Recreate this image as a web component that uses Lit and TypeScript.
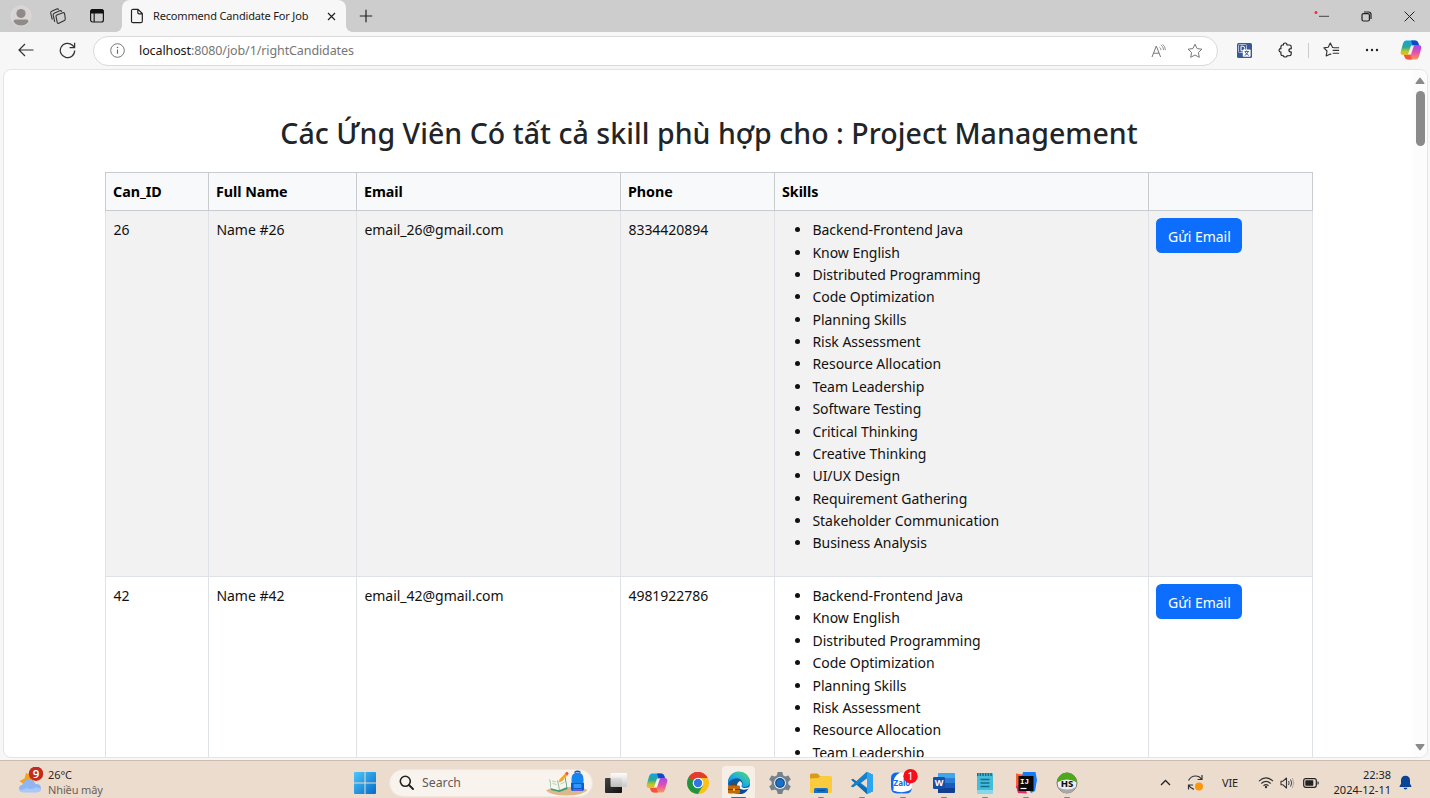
import { LitElement, html, css, svg } from "lit";
import { customElement } from "lit/decorators.js";

const skills = [
  "Backend-Frontend Java", "Know English", "Distributed Programming", "Code Optimization",
  "Planning Skills", "Risk Assessment", "Resource Allocation", "Team Leadership",
  "Software Testing", "Critical Thinking", "Creative Thinking", "UI/UX Design",
  "Requirement Gathering", "Stakeholder Communication", "Business Analysis",
];

const candidates = [
  { id: 26, phone: "8334420894" },
  { id: 42, phone: "4981922786" },
];

const icon = (w: number, h: number, body: unknown, cls = "ic") =>
  html`<svg class=${cls} width=${w} height=${h} viewBox="0 0 ${w} ${h}">${body}</svg>`;

const copilot = (n: string) => svg`
  <defs>
    <linearGradient id="a${n}" x1="0" y1="0" x2="0" y2="1"><stop offset="0" stop-color="#14a0f0"/><stop offset=".45" stop-color="#2aa98f"/><stop offset=".75" stop-color="#b9c92c"/><stop offset="1" stop-color="#f4b52a"/></linearGradient>
    <linearGradient id="b${n}" x1="0" y1="0" x2="0" y2="1"><stop offset="0" stop-color="#a24be8"/><stop offset=".5" stop-color="#e24fae"/><stop offset="1" stop-color="#fb9a55"/></linearGradient>
  </defs>
  <path d="M6 1.500h9q2.500 0 3.200 2.200L19 6h-4q-2.200 0-2.800 2L10.500 14q-.7 2-2.700 2H3.500Q0 16 .8 12.500L3 4.500Q4 1.500 6 1.500z" fill="url(#a${n})"/>
  <path d="M11 1.500h4q2.500 0 3.200 2.200L19 6h-4q-1.500 0-2.200 1z" fill="#1447c8"/>
  <path d="M16 20.500H8q-2.500 0-3.200-2.200L4 16h3.800q2 0 2.700-2L12.200 8q.6-2 2.800-2h3.500Q22 6 21.200 9.500L19 17.500q-1 3-3 3z" fill="url(#b${n})"/>
  <path d="M12 20.500H8q-2.500 0-3.200-2.200L4 16h3.800q1.500 0 2.200-1z" fill="#f4533c"/>
  <path d="M11 6.500h3l-3 9H8z" fill="#fff" opacity=".85"/>`;

const star = "M8 1.200l2.100 4.400 4.800.6-3.500 3.300.9 4.800L8 12l-4.300 2.300.9-4.800L1.100 6.200l4.800-.6z";

const ICONS = {
  avatar: icon(22, 22, svg`<circle cx="11" cy="11" r="10" fill="#d8d5d3" stroke="#dedcda"/><circle cx="11" cy="8.500" r="4.600" fill="#8f8a87"/><path d="M3.500 16.500Q3.500 14.500 5.500 14.500h11q2 0 2 2-2.500 4-7.500 4t-7.500-4z" fill="#8f8a87"/>`),
  spaces: icon(18, 18, svg`<g fill="#cdcdcd" stroke="#333" stroke-width="1.100" stroke-linejoin="round"><path d="M3.300 12.500 1.700 6.200q-.3-1.500 1-2l5-2.200q1.500-.5 2 .8"/><path d="M5.700 14.800 4.200 8.200q-.3-1.500 1-2l5.500-2.400q1.500-.5 2 .9"/><path d="M7 9.300q-.1-1 .9-1.400l6-2.200q1.300-.4 1.700.9l.7 5.200q.1 1.200-.9 1.700l-5.600 2.700q-1.300.5-1.600-.8z"/></g>`),
  tabs: icon(16, 16, svg`<rect x="1.600" y="1.600" width="12.800" height="12.400" rx="2" fill="none" stroke="#1a1a1a" stroke-width="1.200"/><path d="M1.500 2.500q.5-1.500 2-1.500h9q1.500 0 2 1.500V5.600h-13zM4.600 5h1.100v9H4.600z" fill="#111"/>`),
  page: icon(14, 16, svg`<path d="M3 1.300h5l4.300 4.300v7.600q0 1.500-1.500 1.500H3q-1.500 0-1.500-1.500V2.800Q1.500 1.300 3 1.300zM7.800 1.500v3q0 1.300 1.300 1.300h3" fill="none" stroke="#222" stroke-width="1.200"/>`),
  x: icon(9, 9, svg`<path d="M1 1l7 7M8 1 1 8" stroke="#222" stroke-width="1.200"/>`),
  plus: icon(14, 14, svg`<path d="M7 .8v12.400M.8 7h12.400" stroke="#222" stroke-width="1.200"/>`),
  min: icon(16, 12, svg`<circle cx="3" cy="2.500" r="1.500" fill="#f03030"/><path d="M6 6.300h10" stroke="#444" stroke-width="1"/>`),
  restore: icon(11, 11, svg`<rect x="1" y="2.600" width="7.400" height="7.400" rx="1.500" fill="none" stroke="#222" stroke-width="1.200"/><path d="M3 1h4.500Q10 1 10 3.500V8" fill="none" stroke="#222" stroke-width="1.200"/>`),
  close: icon(11, 11, svg`<path d="M.6.6l9.800 9.800M10.400.6.6 10.400" stroke="#222" stroke-width="1"/>`),
  back: icon(16, 14, svg`<path d="M15.500 7H1.200M7 1 1 7l6 6" fill="none" stroke="#333" stroke-width="1.200"/>`),
  reload: icon(17, 17, svg`<path d="M15.700 8.500A7.200 7.200 0 1 1 13.500 3.300L15.600 5.500M15.600.8v4.900h-5" fill="none" stroke="#333" stroke-width="1.250"/>`),
  info: icon(15, 15, svg`<circle cx="7.500" cy="7.500" r="6.800" fill="none" stroke="#777"/><path d="M7.500 6.600v4.200" stroke="#666" stroke-width="1.100"/><circle cx="7.500" cy="4.500" r=".8" fill="#666"/>`),
  read: icon(15, 14, svg`<path d="M1 13 5.300 2l4.300 11M2.500 9.200h5.600" fill="none" stroke="#777"/><path d="M8.400 3.200q1.500.7 1.600 2.900M9.800.9q2.600 1.300 2.800 5.200M11.500.3q3 2 2.900 5.800" fill="none" stroke="#888" stroke-width=".9"/>`),
  star: icon(16, 16, svg`<path d=${star} fill="none" stroke="#777" stroke-linejoin="round"/>`),
  translate: icon(15, 15, svg`<rect width="15" height="15" rx="1.500" fill="#3b5998"/><rect x="1.500" y="1.500" width="8" height="8" rx="1" fill="none" stroke="#c9d4ef" stroke-width=".8"/><path d="M4 3.200h1.500q2.300 0 2.300 2.300T5.500 7.800H4z" fill="none" stroke="#fff"/><rect x="5.800" y="6.500" width="7.800" height="7.300" rx=".8" fill="#fff"/><path d="M7.500 8.500h4.500M9.700 7.500v1M11.200 8.600q-.6 2.500-3.600 4M8.200 9q1 2.300 3.700 3.500" fill="none" stroke="#3b5998" stroke-width=".9"/>`),
  puzzle: icon(15, 16, svg`<path d="M5.400 3Q5.400 1 7.200 1T9 3h2.500q1.700 0 1.700 1.700v1.900q-2.300 0-2.300 1.700t2.300 1.700v2q0 1.700-1.700 1.700H9.200Q9.200 15 7.300 15t-1.900-1.300H4.600q-1.700 0-1.700-1.700v-1.900Q1 10 1 8.300t1.900-1.700V4.700Q2.900 3 4.600 3z" fill="none" stroke="#222" stroke-width="1.150"/>`),
  favs: icon(17, 16, svg`<path d="M10.500 5.500 9.600 5.400 7.300 1 5.200 5.200.9 5.900 4 9l-.8 4.900L7.300 12l1 .5M10.500 5.700h5.600M9.700 8.400h6.400M9.700 11.200h6.400" fill="none" stroke="#333" stroke-width="1.150" stroke-linejoin="round"/>`),
  dots: icon(14, 4, svg`<g fill="#222"><circle cx="2" cy="2" r="1.200"/><circle cx="7" cy="2" r="1.200"/><circle cx="12" cy="2" r="1.200"/></g>`),
  up: icon(10, 8, svg`<path d="M1.200 7Q0 7 .6 6L4.300.9q.7-.8 1.400 0L9.400 6Q10 7 8.800 7z" fill="#8a8a8a"/>`),
  down: icon(10, 8, svg`<path d="M1.200 1Q0 1 .6 2l3.700 5.100q.7.8 1.400 0L9.400 2Q10 1 8.800 1z" fill="#8a8a8a"/>`),
  weather: icon(28, 28, svg`<path d="M1.500 14l5-2.500L8 6l5 2 3 7-8 4z" fill="#f3a21f"/><path d="M5.500 25.300Q1 25 1 21.500q0-3 3.400-3.800Q5.500 12.700 11 12.700q5 0 6.500 4.300 5.500-.2 5.500 4.300 0 4-4.500 4z" fill="#8fb5f3"/><path d="M5.500 25.300Q1.500 25 1 22q4 2 7-1 6 2.500 10-1 3 2 5 1 0 4.300-4.500 4.300z" fill="#a9c9fb"/><circle cx="18" cy="6.700" r="7.200" fill="#c42b1c"/><text x="18" y="11" text-anchor="middle" font-size="11.500" font-weight="600" fill="#fff">9</text>`),
  windows: icon(22, 22, svg`<defs><linearGradient id="w" x1="0" y1="0" x2="1" y2="1"><stop offset="0" stop-color="#4cc8fa"/><stop offset="1" stop-color="#0569c9"/></linearGradient></defs><path d="M1 0h9.500v10.500H0V1Q0 0 1 0zM11.500 0H21q1 0 1 1v9.500H11.500zM0 11.500h10.500V22H1q-1 0-1-1zM11.500 11.500H22V21q0 1-1 1h-9.500z" fill="url(#w)"/>`),
  search: icon(15, 15, svg`<circle cx="6.300" cy="6.300" r="5" fill="none" stroke="#222" stroke-width="1.600"/><path d="M10 10l4 4" stroke="#222" stroke-width="1.900" stroke-linecap="round"/>`),
  school: icon(43, 26, svg`<path d="M1 20.500Q5 17 22 17q17 0 20.500 3Q38 25.500 21 25.500 6 25.500 1 20.500z" fill="#dcb98c"/><path d="M4.500 9.500 13 11l7.500-4 2 12-8 3-8.500-2z" fill="#3b9b72"/><path d="M5 8.500l7.500 1.700 7-4 2 11-7.500 3-8-2z" fill="#f7f6ec"/><path d="M12.500 10.200l2 10" stroke="#9db7a5"/><path d="M7 11l4 1M7.500 13.500l4 1M15 11.500l4-2M15.500 14l4-2" stroke="#9ba" stroke-width=".7"/><path d="M13.500 12.500l1.200-3.300L21 2.600l2.200 1.800-6.500 6.900z" fill="#f5a623"/><path d="M20 3.500l1.600-1.700q1.800 0 2 2l-1.500 1.700z" fill="#ef5b4c"/><path d="M29.500 2.500q3-2.500 6 0" fill="none" stroke="#0b55b8" stroke-width="1.500"/><path d="M26.500 9q0-6.500 6-6.500t6 6.500v10q0 2-2 2h-8q-2 0-2-2z" fill="#1485ef"/><path d="M26 13h13v6q0 2-2 2h-9q-2 0-2-2z" fill="#0a5dd0"/><rect x="28.500" y="14" width="8" height="4" rx="1" fill="#2f98fa"/><path d="M28 20h9" stroke="#b256e0" stroke-width="1.200"/>`),
  desktops: icon(22, 22, svg`<defs><linearGradient id="d" x1="0" y1="0" x2="1" y2="1"><stop offset="0" stop-color="#444"/><stop offset="1" stop-color="#111"/></linearGradient><linearGradient id="e" x1="0" y1="0" x2="0" y2="1"><stop offset="0" stop-color="#fff"/><stop offset="1" stop-color="#c9c8c7"/></linearGradient></defs><rect y="6" width="17" height="15" rx="1" fill="url(#d)"/><rect x="5.500" y="1" width="16.500" height="14" rx="1" fill="url(#e)" opacity=".93"/>`),
  chrome: icon(24, 24, svg`<circle cx="12" cy="12" r="11" fill="#fbc116"/><path d="M12 12 2.500 6.500A11 11 0 0 1 21.500 6.500L21.400 7H12z" fill="#e33b2e"/><path d="M12 12 2.500 6.500A11 11 0 0 0 12 23l5-8.500z" fill="#229342"/><path d="M12 12 2.500 6.500Q6 .8 12 1t9.500 6H12q-4 0-5 3z" fill="#e33b2e"/><circle cx="12" cy="12" r="5.300" fill="#fff"/><circle cx="12" cy="12" r="4.200" fill="#2f74e8"/>`),
  edge: icon(24, 24, svg`<defs><linearGradient id="g" x1="0" y1="1" x2="1" y2="0"><stop offset="0" stop-color="#0c6fc8"/><stop offset=".5" stop-color="#1fb3dc"/><stop offset="1" stop-color="#61d85a"/></linearGradient></defs><circle cx="12" cy="12" r="11" fill="#1156a3"/><path d="M1 12A11 11 0 0 1 23 11q0 5-6 5-3 0-2-1.800 1.500-2.500-.5-5Q12 6.500 8 7.500 3 8.500 1 13z" fill="url(#g)"/><path d="M14 19.500Q10 18 10 14q.3-2.500 2.800-4 2.900 1.500 2.100 3.700-1.400 2.900 2.600 3.200 3 0 4.800-1Q20 20.500 14 19.500z" fill="#eef7fc"/><path d="M12 17q3 3 9 1Q18 23.500 12 23z" fill="#0c4a99"/><rect x="1" y="14.500" width="12" height="8" rx="1.200" fill="#c26a0b"/><path d="M1 18.500h12M5 14.500v-1.300h4v1.300" stroke="#7b3e05" fill="none"/><rect x="6" y="17.500" width="2" height="2.200" fill="#ffc94d"/>`),
  gear: icon(24, 24, svg`<path d="M9.700 1h4.600l.8 3.200 2 1.200L20.500 4.500l2.300 4-2.500 2.300v2.400l2.500 2.300-2.300 4-3.400-.9-2 1.200-.8 3.200H9.700l-.8-3.200-2-1.200-3.400.9-2.300-4 2.500-2.300v-2.400L1.200 8.500l2.300-4 3.400.9 2-1.200z" fill="#75818b"/><circle cx="12" cy="12" r="6" fill="#e9edf0"/><circle cx="12" cy="12" r="4.900" fill="#0c4c8c"/><circle cx="12" cy="12" r="3.700" fill="#1b6fc4"/>`),
  folder: icon(24, 24, svg`<path d="M1 4q0-1.500 1.500-1.500h6L11 5h8v5H1z" fill="#d99b15"/><path d="M1 7.500 9 7l2.500-2h10Q23 5 23 6.500v14q0 1.500-1.500 1.500h-19Q1 22 1 20.500z" fill="#fbcb3e"/><path d="M5 22v-3.500Q5 17 6.500 17h11q1.500 0 1.500 1.500V22z" fill="#1173cf"/><path d="M8 19.500h8" stroke="#0a4b93" stroke-width="1.300"/>`),
  code: icon(24, 24, svg`<path d="M17 1l6 2.700v16.600L17 23 6.500 13.500 3 16.300l-2-1L16.500 1z" fill="#1482cc"/><path d="M1 8.700l2-1L17 18v5L6.500 13.500z" fill="#0d6db5"/><path d="M17 1l6 2.700v16.600L17 23z" fill="#2ba5ef"/><path d="M17 7.300 10.800 12l6.200 4.700z" fill="#eddccd"/><path d="M1 15.300 17 1v6L3 16.300z" fill="#1482cc"/>`),
  zalo: icon(30, 28, svg`<path d="M9 3.500h9q6 0 6 6v9q0 6.500-6 6.500H9q-6 0-6-6.500v-9q0-6 6-6z" fill="#fff" stroke="#d5e2f5" stroke-width=".6"/><path d="M9 3.500h3Q4 8 5.500 17q.5 3.500-.5 4.500 8 3 15 .5 3-1 4-3-.5 5.500-6 5.500H9q-6 0-6-6.500v-9q0-5.500 6-5.500z" fill="#1268ea"/><text x="5.500" y="17" font-size="8" font-weight="700" fill="#1268ea">Zalo</text><circle cx="22.500" cy="7.200" r="7.200" fill="#f50f19"/><text x="22.500" y="11.200" text-anchor="middle" font-size="11" fill="#fff">1</text>`),
  word: icon(24, 24, svg`<rect x="6" y="2" width="17" height="20" rx="1.500" fill="#2b7cd3"/><path d="M6 2h15.500Q23 2 23 3.500V7H6z" fill="#41a5ee"/><path d="M6 12h17v5H6z" fill="#185abd"/><path d="M6 17h17v3.500q0 1.500-1.500 1.500H6z" fill="#103f91"/><rect x="1" y="6" width="12" height="12" rx="1.200" fill="#174ea6"/><text x="7" y="15.300" text-anchor="middle" font-size="9" font-weight="700" fill="#fff">W</text>`),
  notepad: icon(24, 24, svg`<rect x="4" y="2" width="16" height="20.500" rx="1.500" fill="#43bdda"/><path d="M4 19h16v2q0 1.500-1.500 1.500h-13Q4 22.500 4 21z" fill="#84d9ea"/><path d="M4 3.500h16" stroke="#176b8d" stroke-width="3" stroke-dasharray="1.500 1.150"/><path d="M7.500 8.500h9M7.500 12h9M7.500 15.500h9" stroke="#176b8d" stroke-width="1.300"/>`),
  idea: icon(24, 24, svg`<path d="M2 2.500 12 4l-2 17-8-4z" fill="#fb5f2d"/><path d="M2 15l8-2 3 9.500-9-.5z" fill="#e62668"/><path d="M9 1h12.500L23 9l-2 11-4 2L8 6z" fill="#147cf5"/><rect x="4.500" y="5" width="15" height="15" fill="#090909"/><text x="6" y="12.500" font-size="7.500" font-weight="700" font-family="Liberation Mono, monospace" fill="#fff">IJ</text><path d="M6.500 17.500h6" stroke="#fff" stroke-width="1.200"/>`),
  hs: icon(24, 24, svg`<circle cx="12" cy="12" r="10" fill="#eee" stroke="#777"/><path d="M2 11.500a10 10 0 0 1 20 0q-10-6-20 0z" fill="#4ea81c"/><path d="M3 16q9 5 18 0-3 6-9 6t-9-6z" fill="#a9aaa8"/><text x="12" y="15.500" text-anchor="middle" font-size="9.500" font-weight="800" fill="#111">HS</text>`),
  chevron: icon(11, 7, svg`<path d="M1 6l4.500-4.500L10 6" fill="none" stroke="#222" stroke-width="1.300"/>`),
  sync: icon(18, 18, svg`<path d="M1.500 6.500Q4 2 8.500 2q4 0 6 3.200M15 1v4.500h-4.500M1.500 15.500V11H6M2 11.500q1.500 3 5 3.800" fill="none" stroke="#333" stroke-width="1.200"/><circle cx="12" cy="12.500" r="4" fill="#ff960a"/>`),
  wifi: icon(16, 13, svg`<path d="M1 5.200q7-6.500 14 0M3.300 7.500q4.700-4.200 9.400 0M5.500 9.700q2.500-2.100 5 0" fill="none" stroke="#333" stroke-width="1.150"/><circle cx="8" cy="11" r="1.200" fill="#333"/>`),
  volume: icon(15, 12, svg`<path d="M1 4.200h2L6.500 1v10L3 7.800H1z" fill="none" stroke="#333" stroke-width="1.100" stroke-linejoin="round"/><path d="M8.500 4q1.300 2 0 4M10.500 2.500q2.500 3.500 0 7" fill="none" stroke="#444"/><path d="M12.300 1q3 5 0 10" fill="none" stroke="#aaa"/>`),
  battery: icon(16, 10, svg`<rect x=".7" y=".7" width="12.600" height="8.600" rx="2" fill="none" stroke="#222" stroke-width="1.200"/><rect x="2.300" y="2.300" width="8" height="5.400" rx=".6" fill="#222"/><path d="M14.500 3.200q1.300 0 1.300 1.800t-1.300 1.800z" fill="#222"/>`),
  bell: icon(13, 15, svg`<path d="M6.500.7q4.300 0 4.500 4.600v3.500l1.500 2.400q.2.800-.6.800H1.100q-.8 0-.6-.8L2 8.800V5.300Q2.200.7 6.500.7zM4.500 12.700h4q-.3 1.700-2 1.700t-2-1.700z" fill="#0a4296"/>`),
};

@customElement("browser-chrome")
class BrowserChrome extends LitElement {
  static styles = css`
    :host { display: block; font-family: "Noto Sans", sans-serif; }
    svg { display: block; flex: none; }
    .strip { display: flex; height: 32px; background: #cdcdcd; align-items: center; box-sizing: border-box; }
    .left { display: flex; align-items: center; width: 122px; padding-left: 10px; box-sizing: border-box; }
    .left .spaces { margin-left: 17px; }
    .left .tabs { margin-left: 22px; }
    .tab { display: flex; position: relative; align-items: center; width: 224px; height: 32px; box-sizing: border-box; padding: 0 10px 0 8px; background: #f7f7f7; border-radius: 8px 8px 0 0; }
    .tab::before, .tab::after { content: ""; position: absolute; bottom: 0; width: 6px; height: 6px; }
    .tab::before { left: -6px; background: radial-gradient(circle at 0 0, #cdcdcd 5.500px, #f7f7f7 6px); }
    .tab::after { right: -6px; background: radial-gradient(circle at 100% 0, #cdcdcd 5.500px, #f7f7f7 6px); }
    .title { flex: 1; margin-left: 9px; padding-bottom: 2px; font-size: 11px; color: #1b1b1b; white-space: nowrap; letter-spacing: -0.17px; }
    .plus { margin-left: 13px; }
    .win { display: flex; align-items: center; margin-left: auto; padding-right: 15px; }
    .win .r { margin: 0 32px 0 32px; }
    .bar { display: flex; height: 37px; background: #f7f7f7; align-items: center; box-sizing: border-box; }
    .back, .reload { padding-bottom: 1px; }
    .back { margin-left: 18px; }
    .reload { margin-left: 25px; }
    .url { display: flex; align-items: center; width: 1125px; height: 30px; margin-left: 17px; box-sizing: border-box; border: 1px solid #d9d9d9; border-radius: 15px; background: #fff; padding: 0 14px 0 16px; }
    .addr { flex: 1; margin-left: 14px; padding-bottom: 1px; font-size: 12.500px; color: #767676; white-space: nowrap; letter-spacing: -0.1px; }
    .addr b { font-weight: 400; color: #151515; }
    .read { margin-right: 21px; }
    .ext { display: flex; align-items: center; flex: 1; padding-left: 19px; padding-bottom: 1px; }
    .pz { margin-left: 26px; }
    .sep { width: 1px; height: 15px; background: #ccc; margin-left: 15px; }
    .fv { margin-left: 14px; }
    .dt { margin-left: 25px; }
    .cp { margin-left: 21px; }
  `;
  render() {
    return html`
      <div class="strip">
        <div class="left"><span>${ICONS.avatar}</span><span class="spaces">${ICONS.spaces}</span><span class="tabs">${ICONS.tabs}</span></div>
        <div class="tab">${ICONS.page}<span class="title">Recommend Candidate For Job</span>${ICONS.x}</div>
        <span class="plus">${ICONS.plus}</span>
        <div class="win">${ICONS.min}<span class="r">${ICONS.restore}</span>${ICONS.close}</div>
      </div>
      <div class="bar">
        <span class="back">${ICONS.back}</span><span class="reload">${ICONS.reload}</span>
        <div class="url">${ICONS.info}<span class="addr"><b>localhost</b>:8080/job/1/rightCandidates</span><span class="read">${ICONS.read}</span>${ICONS.star}</div>
        <div class="ext">${ICONS.translate}<span class="pz">${ICONS.puzzle}</span><span class="sep"></span><span class="fv">${ICONS.favs}</span><span class="dt">${ICONS.dots}</span><span class="cp">${icon(22, 22, copilot("t"))}</span></div>
      </div>`;
  }
}

@customElement("candidate-page")
class CandidatePage extends LitElement {
  static styles = css`
    :host { display: block; height: 691px; background: #f7f7f7; padding: 0 2px 0 3px; box-sizing: border-box; font-family: "Noto Sans", sans-serif; }
    .view { display: flex; height: 689px; box-sizing: border-box; border: 1px solid #e4e4e4; border-radius: 8px; background: #fff; overflow: hidden; }
    .doc { width: 1409px; height: 687px; overflow: hidden; padding: 45px 0 0 101px; box-sizing: border-box; }
    h2 { margin: 0 0 21px; width: 1208px; text-align: center; height: 36px; line-height: 36px; font-size: 28.500px; font-weight: 500; color: #212529; white-space: nowrap; letter-spacing: 0.05px; }
    table { table-layout: fixed; width: 1208px; border-collapse: collapse; font-size: 14px; line-height: 22.370px; letter-spacing: -0.03px; color: #111; }
    th, td { box-sizing: border-box; padding: 8.200px 7.450px 6.200px; text-align: left; vertical-align: top; border: 1px solid #dee2e6; white-space: nowrap; }
    th { padding: 8px 7px 6.600px; background: #f8f9fa; border-color: #c9cccf; color: #000; font-weight: 700; font-size: 14.300px; letter-spacing: -0.05px; }
    .odd td { background: #f2f2f2; }
    .c1 { width: 103px; } .c2 { width: 148px; } .c3 { width: 264px; } .c4 { width: 154px; } .c5 { width: 374px; }
    ul { margin: 0 0 14.900px; padding-left: 30px; }
    .btn { display: block; width: 86px; height: 35px; margin-top: -0.700px; padding: 2px 0 0; border: 0; border-radius: 5.500px; background: #0d6efd; color: #fff; font: 400 14px/33px "Noto Sans", sans-serif; }
    .scroll { display: flex; flex-direction: column; align-items: center; width: 14px; padding: 7px 0 6px; box-sizing: border-box; background: #fcfcfc; }
    .thumb { width: 9px; height: 55px; margin: 6px 0 auto; border-radius: 5px; background: #8a8a8a; }
    svg { display: block; flex: none; }
  `;
  render() {
    return html`<div class="view">
      <div class="doc">
        <h2>Các Ứng Viên Có tất cả skill phù hợp cho : Project Management</h2>
        <table>
          <thead><tr><th class="c1">Can_ID</th><th class="c2">Full Name</th><th class="c3">Email</th><th class="c4">Phone</th><th class="c5">Skills</th><th></th></tr></thead>
          <tbody>${candidates.map((c, i) => html`<tr class=${i % 2 ? "even" : "odd"}>
            <td>${c.id}</td><td>Name #${c.id}</td><td>email_${c.id}@gmail.com</td><td>${c.phone}</td>
            <td><ul>${skills.map((s) => html`<li>${s}</li>`)}</ul></td>
            <td><button class="btn">Gửi Email</button></td></tr>`)}</tbody>
        </table>
      </div>
      <div class="scroll">${ICONS.up}<span class="thumb"></span>${ICONS.down}</div>
    </div>`;
  }
}

@customElement("task-bar")
class TaskBar extends LitElement {
  static styles = css`
    :host { display: flex; align-items: center; height: 38px; box-sizing: border-box; border-top: 1px solid #c9bcb1; padding-top: 6px; background: #ecdccd; font-family: "Noto Sans", sans-serif; color: #222; }
    svg { display: block; flex: none; }
    .weather { display: flex; width: 344px; box-sizing: border-box; padding-left: 18px; gap: 2px; margin-top: -2px; }
    .wt { font-size: 11px; line-height: 15px; letter-spacing: -0.1px; color: #2b2724; }
    .wt div + div { color: #6a625b; letter-spacing: -0.13px; }
    .slot { display: flex; flex: none; position: relative; width: 41px; height: 34px; justify-content: center; align-items: center; }
    .box { display: flex; align-items: center; width: 204px; height: 28px; box-sizing: border-box; border-radius: 14px; margin: 0 2px 0 4px; padding: 0 4px 0 9px; background: #f9f3ee; border: 1px solid #f1e6dc; }
    .box span { flex: 1; margin-left: 8px; font-size: 12.300px; color: #5f5a56; }
    .on { background: #f7eee6; width: 33px; margin: 0 4px; border-radius: 4px; }
    .run::after { content: ""; position: absolute; bottom: 1px; width: 6px; height: 2px; border-radius: 1px; background: #8c8177; }
    .on::after { content: ""; position: absolute; bottom: 1px; width: 15px; height: 2px; border-radius: 1px; background: #1477c8; }
    .tray { display: flex; align-items: center; margin-left: auto; padding-right: 18px; }
    .sync { margin-left: 16px; }
    .vie { margin-left: 17px; width: 18px; font-size: 11px; letter-spacing: -0.2px; }
    .wifi { margin-left: 18px; } .vol { margin-left: 6px; } .bat { margin-left: 8px; }
    .time { margin-left: 11px; width: 61px; text-align: right; font-size: 11px; line-height: 15px; letter-spacing: 0; white-space: nowrap; margin-top: -2px; }
    .bell { margin-left: 8px; }
  `;
  render() {
    const run = ["folder", "code", "zalo", "word", "notepad", "idea", "hs"] as const;
    return html`
      <div class="weather">${ICONS.weather}<div class="wt"><div>26°C</div><div>Nhiều mây</div></div></div>
      <span class="slot">${ICONS.windows}</span>
      <div class="box">${ICONS.search}<span>Search</span>${ICONS.school}</div>
      <span class="slot">${ICONS.desktops}</span>
      <span class="slot">${icon(22, 22, copilot("b"))}</span>
      <span class="slot">${ICONS.chrome}</span>
      <span class="slot on">${ICONS.edge}</span>
      <span class="slot">${ICONS.gear}</span>
      ${run.map((k) => html`<span class="slot run">${ICONS[k]}</span>`)}
      <div class="tray">${ICONS.chevron}<span class="sync">${ICONS.sync}</span><span class="vie">VIE</span><span class="wifi">${ICONS.wifi}</span><span class="vol">${ICONS.volume}</span><span class="bat">${ICONS.battery}</span>
        <div class="time"><div>22:38</div><div>2024-12-11</div></div><span class="bell">${ICONS.bell}</span></div>`;
  }
}

@customElement("app-root")
class AppRoot extends LitElement {
  static styles = css`:host { display: flex; flex-direction: column; width: 1430px; height: 798px; overflow: hidden; }`;
  render() {
    return html`<browser-chrome></browser-chrome><candidate-page></candidate-page><task-bar></task-bar>`;
  }
}
